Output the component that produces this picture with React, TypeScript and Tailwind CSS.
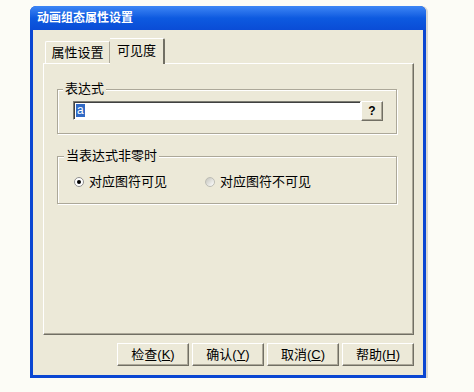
import React, { useState } from 'react';

const btnEdge =
    'border border-t-white border-l-white border-r-[#716f64] border-b-[#716f64] shadow-[inset_-1px_-1px_0_#aca899]';

const DlgButton: React.FC<{ label: string; hotkey: string }> = ({ label, hotkey }) => (
    <button className={`w-[72px] h-[23px] bg-[#ece9d8] ${btnEdge} text-[13px] leading-[15px] text-black flex items-center justify-center`}>
        {label}(<span className="underline">{hotkey}</span>)
    </button>
);

const Radio: React.FC<{ checked: boolean; label: string; onClick: () => void; className?: string }> = ({ checked, label, onClick, className }) => (
    <div onClick={onClick} className={`flex items-center gap-[5px] cursor-default ${className || ''}`}>
        <span
            className={`w-[10px] h-[10px] rounded-full flex items-center justify-center border ${
                checked ? 'bg-white border-[#8f8f8f]' : 'bg-gradient-to-br from-[#c4c4bc] to-white border-[#bdbdb5]'
            }`}
        >
            {checked && <span className="w-[4px] h-[4px] rounded-full bg-black" />}
        </span>
        <span className="text-[13px] leading-[15px] text-black">{label}</span>
    </div>
);

const App: React.FC = () => {
    const [tab, setTab] = useState(1);
    const [visible, setVisible] = useState(true);

    return (
        <div className="w-[474px] h-[392px] bg-[#fcfcf6] pt-[6px] pl-[30px] font-['Liberation_Sans','Noto_Sans_CJK_SC',sans-serif]">
            <div className="w-[396px] h-[372px] flex flex-col rounded-t-[6px] overflow-hidden bg-[#0a46d2] shadow-[2px_0_0_#d8d8d4]">
                {/* title bar */}
                <div className="h-[24px] shrink-0 flex items-center pl-[7px] bg-gradient-to-b from-[#3d86f5] via-[#0d5ae0] to-[#0a4cd6]">
                    <span className="text-white font-bold text-[12px] leading-[14px]">动画组态属性设置</span>
                </div>

                <div className="flex-1 mx-[3px] mb-[3px] bg-[#ece9d8] pt-[8px] pl-[10px] pr-[9px]">
                    {/* tabs */}
                    <div className="flex items-end h-[25px] pl-[2px]">
                        <div
                            onClick={() => setTab(0)}
                            className="w-[65px] h-[22px] border-t border-l border-t-white border-l-white border-r border-r-[#aca899] rounded-tl-[2px] flex items-center justify-center text-[13px] leading-[15px] text-black"
                        >
                            属性设置
                        </div>
                        <div
                            onClick={() => setTab(1)}
                            className="relative z-10 w-[55px] h-[26px] -mb-px bg-[#ece9d8] border-t border-t-white border-r-2 border-r-[#716f64] rounded-tr-[2px] flex items-center justify-center text-[13px] leading-[15px] text-black pb-[2px]"
                        >
                            可见度
                        </div>
                    </div>

                    {/* panel */}
                    <div className="h-[272px] border border-t-white border-l-white border-r-[#716f64] border-b-[#716f64] shadow-[inset_-1px_-1px_0_#aca899] pt-[18px] pl-[13px] pr-[16px]">
                        {tab === 1 && (
                            <>
                                <fieldset className="border border-[#aca899] shadow-[1px_1px_0_#fff,inset_1px_1px_0_#fff] pt-[5px] pb-[12px] pl-[15px] pr-[13px]">
                                    <legend className="-ml-[10px] px-[2px] bg-[#ece9d8] text-[13px] leading-[14px] text-black">表达式</legend>
                                    <div className="flex items-start">
                                        <div className="flex-1 h-[19px] bg-white border border-t-[#7b7b72] border-l-[#7b7b72] border-r-white border-b-white shadow-[inset_1px_1px_0_#404040] pl-[2px] flex items-center">
                                            <span className="bg-[#316ac5] text-white text-[12px] leading-[13px] px-px">a</span>
                                        </div>
                                        <button className={`w-[22px] h-[20px] bg-[#ece9d8] ${btnEdge} text-[12px] font-bold leading-[14px] text-black flex items-center justify-center`}>
                                            ?
                                        </button>
                                    </div>
                                </fieldset>

                                <fieldset className="mt-[15px] border border-[#aca899] shadow-[1px_1px_0_#fff,inset_1px_1px_0_#fff] pt-[11px] pb-[14px] pl-[16px]">
                                    <legend className="-ml-[10px] px-[2px] bg-[#ece9d8] text-[13px] leading-[14px] text-black">当表达式非零时</legend>
                                    <div className="flex items-center">
                                        <Radio className="w-[131px]" checked={visible} label="对应图符可见" onClick={() => setVisible(true)} />
                                        <Radio checked={!visible} label="对应图符不可见" onClick={() => setVisible(false)} />
                                    </div>
                                </fieldset>
                            </>
                        )}
                    </div>

                    {/* buttons */}
                    <div className="mt-[8px] flex justify-end gap-[3px]">
                        <DlgButton label="检查" hotkey="K" />
                        <DlgButton label="确认" hotkey="Y" />
                        <DlgButton label="取消" hotkey="C" />
                        <DlgButton label="帮助" hotkey="H" />
                    </div>
                </div>
            </div>
        </div>
    );
};

export default App;
